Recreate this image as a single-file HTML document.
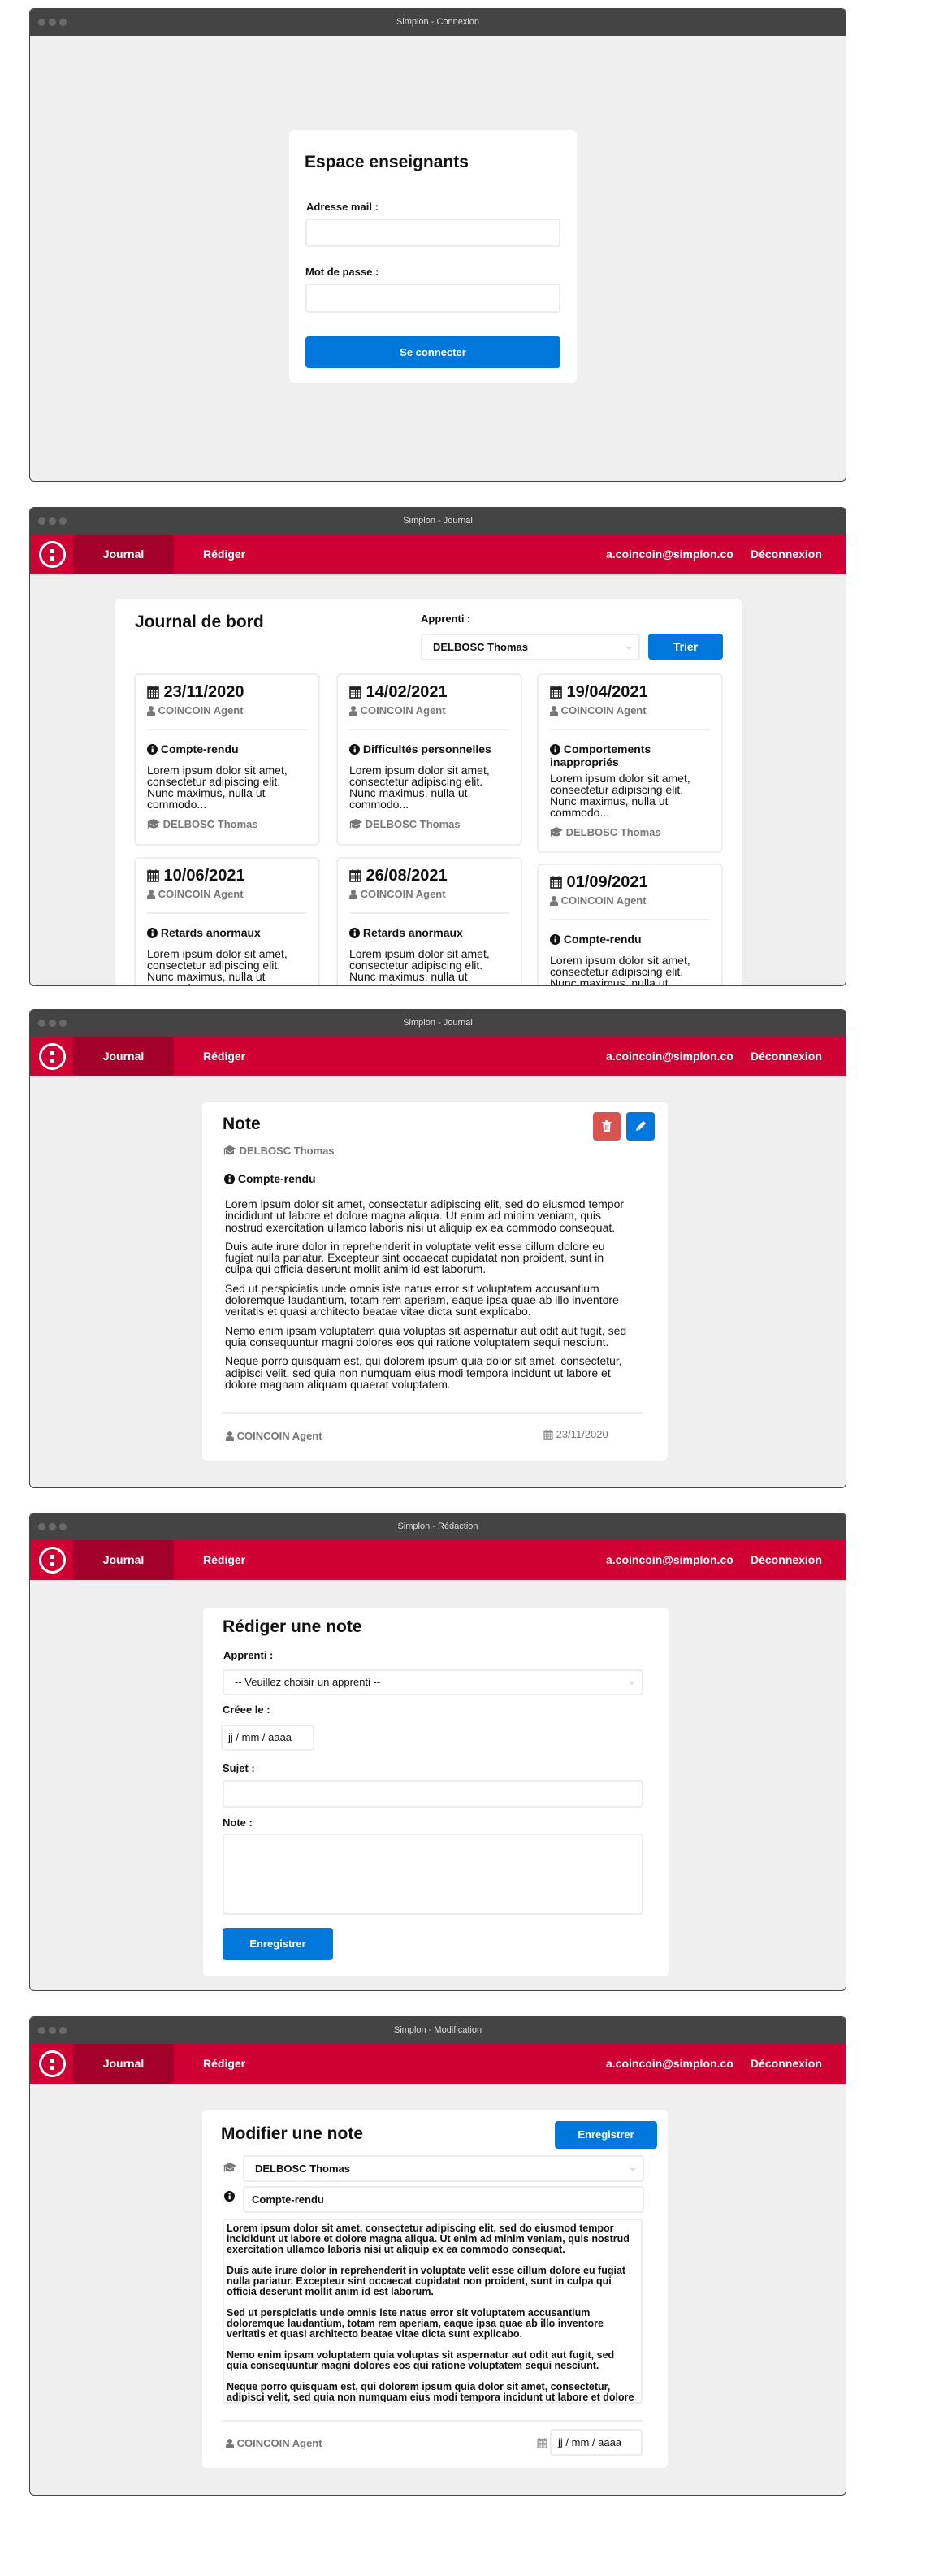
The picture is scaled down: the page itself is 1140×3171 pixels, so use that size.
<!DOCTYPE html>
<html><head><meta charset="utf-8">
<style>
*{box-sizing:border-box;margin:0;padding:0}
body{width:1140px;height:3171px;background:#fff;font-family:"Liberation Sans",sans-serif;color:#111;position:relative;overflow:hidden}
.win{position:absolute;left:36px;width:1006px;background:#efefef;border:1px solid #444;border-radius:6px;overflow:hidden}
.tb{position:absolute;left:0;top:0;right:0;height:33px;background:#444;color:#ddd;font-size:11px;text-align:center;line-height:33px}
.dots{position:absolute;left:10px;top:12px;line-height:0;display:flex}
.dots i{display:block;width:9px;height:9px;border-radius:50%;background:#6a6a6a;margin-right:4px}
.nav{position:absolute;left:0;right:0;top:33px;height:49px;background:#cf0034;color:#fff;font-weight:bold;font-size:14px}
.nav .logo{position:absolute;left:11px;top:8px;width:33px;height:33px;border:3px solid #fff;border-radius:50%}
.nav .logo b{position:absolute;left:11px;width:5px;height:5px;background:#fff}
.nav .tab{position:absolute;left:53px;top:0;width:124px;height:49px;background:#a3002b;text-align:center;line-height:49px}
.nav span{position:absolute;top:0;line-height:49px}
.card{position:absolute;background:#fff;border-radius:6px}
.abs{position:absolute}
.inp{position:absolute;background:#fff;border:2px solid #ececec;border-radius:4px}
.btn{position:absolute;background:#0077db;color:#fff;font-weight:bold;font-size:13px;border-radius:4px;text-align:center}
.lbl{position:absolute;font-size:13px;font-weight:bold;line-height:16px}
.h{position:absolute;font-size:21px;font-weight:bold;line-height:26px}
.grey{color:#777}
.jc{position:absolute;width:229px;background:#fff;border:2px solid #eee;border-radius:6px;padding:11px 14px 0}
.jc .d{font-size:20px;font-weight:bold;line-height:20px;white-space:nowrap}
.jc .a{font-size:13px;font-weight:bold;color:#777;line-height:16px;margin-top:5px}
.jc hr{border:0;height:2px;background:#eee;margin-top:14px}
.jc .t{font-size:14px;font-weight:bold;line-height:16px;margin-top:15px}
.jc .p{font-size:14px;line-height:14px;margin-top:11px;white-space:nowrap}
.jc .s{font-size:13px;font-weight:bold;color:#777;line-height:16px;margin-top:10px}
svg{vertical-align:-2px}
.txt{position:absolute;font-size:14px;line-height:14.3px;white-space:nowrap}
.txt p{margin-bottom:9px}
.sel:after{content:"";position:absolute;right:8px;top:50%;border:4px solid transparent;border-top-color:#ddd;margin-top:-1px}
</style></head><body>

<!-- Window 1 -->
<div class="win" style="top:10px;height:583px">
  <div class="tb"><div class="dots"><i></i><i></i><i></i></div>Simplon - Connexion</div>
  <div class="card" style="left:319px;top:149px;width:354px;height:311px">
    <div class="h" style="left:19px;top:27px">Espace enseignants</div>
    <div class="lbl" style="left:21px;top:87px">Adresse mail :</div>
    <div class="inp" style="left:20px;top:109px;width:314px;height:35px"></div>
    <div class="lbl" style="left:20px;top:167px">Mot de passe :</div>
    <div class="inp" style="left:20px;top:189px;width:314px;height:36px"></div>
    <div class="btn" style="left:20px;top:254px;width:314px;height:39px;line-height:39px">Se connecter</div>
  </div>
</div>

<!-- Window 2 -->
<div class="win" style="top:624px;height:590px">
  <div class="tb"><div class="dots"><i></i><i></i><i></i></div>Simplon - Journal</div>
  <div class="nav"><div class="logo"><b style="top:7px"></b><b style="top:16px"></b></div><div class="tab">Journal</div><span style="left:213px">Rédiger</span><span style="left:709px">a.coincoin@simplon.co</span><span style="left:887px">Déconnexion</span></div>
  <div class="card" style="left:105px;top:112px;width:771px;height:600px">
    <div class="h" style="left:24px;top:16px">Journal de bord</div>
    <div class="lbl" style="left:376px;top:17px">Apprenti :</div>
    <div class="inp sel" style="left:376px;top:43px;width:270px;height:33px;font-size:13px;font-weight:bold;line-height:29px;padding-left:13px">DELBOSC Thomas</div>
    <div class="btn" style="left:656px;top:43px;width:92px;height:32px;line-height:32px;font-size:14px">Trier</div>

    <div class="jc" style="left:23px;top:92px;height:212px">
      <div class="d"><svg width="15" height="17" viewBox="0 0 15 17"><rect x="1" y="3" width="13" height="13" fill="none" stroke="#222" stroke-width="1.6"/><rect x="1" y="3" width="13" height="3" fill="#222"/><path d="M4 1v4M11 1v4M1 9h13M1 12h13M4.5 6v10M7.5 6v10M10.5 6v10" stroke="#222" stroke-width="1"/></svg> 23/11/2020</div>
      <div class="a"><svg width="10" height="12" viewBox="0 0 10 12"><circle cx="5" cy="3" r="3" fill="#777"/><path d="M0 12v-3q0-3 5-3t5 3v3z" fill="#777"/></svg> COINCOIN Agent</div>
      <hr>
      <div class="t"><svg width="13" height="13" viewBox="0 0 14 14"><circle cx="7" cy="7" r="7" fill="#111"/><rect x="6" y="6" width="2.4" height="5" fill="#fff"/><circle cx="7.2" cy="3.8" r="1.3" fill="#fff"/></svg> Compte-rendu</div>
      <div class="p">Lorem ipsum dolor sit amet,<br>consectetur adipiscing elit.<br>Nunc maximus, nulla ut<br>commodo...</div>
      <div class="s"><svg width="16" height="13" viewBox="0 0 16 13"><path d="M8 0L0 4l8 4 8-4z M3 6v4q5 3 10 0V6L8 9z" fill="#777"/><path d="M1.5 4.5v7" stroke="#777" stroke-width="1.3"/></svg> DELBOSC Thomas</div>
    </div>
    <div class="jc" style="left:272px;top:92px;height:212px">
      <div class="d"><svg width="15" height="17" viewBox="0 0 15 17"><rect x="1" y="3" width="13" height="13" fill="none" stroke="#222" stroke-width="1.6"/><rect x="1" y="3" width="13" height="3" fill="#222"/><path d="M4 1v4M11 1v4M1 9h13M1 12h13M4.5 6v10M7.5 6v10M10.5 6v10" stroke="#222" stroke-width="1"/></svg> 14/02/2021</div>
      <div class="a"><svg width="10" height="12" viewBox="0 0 10 12"><circle cx="5" cy="3" r="3" fill="#777"/><path d="M0 12v-3q0-3 5-3t5 3v3z" fill="#777"/></svg> COINCOIN Agent</div>
      <hr>
      <div class="t" style="white-space:nowrap"><svg width="13" height="13" viewBox="0 0 14 14"><circle cx="7" cy="7" r="7" fill="#111"/><rect x="6" y="6" width="2.4" height="5" fill="#fff"/><circle cx="7.2" cy="3.8" r="1.3" fill="#fff"/></svg> Difficultés personnelles</div>
      <div class="p">Lorem ipsum dolor sit amet,<br>consectetur adipiscing elit.<br>Nunc maximus, nulla ut<br>commodo...</div>
      <div class="s"><svg width="16" height="13" viewBox="0 0 16 13"><path d="M8 0L0 4l8 4 8-4z M3 6v4q5 3 10 0V6L8 9z" fill="#777"/><path d="M1.5 4.5v7" stroke="#777" stroke-width="1.3"/></svg> DELBOSC Thomas</div>
    </div>
    <div class="jc" style="left:519px;top:92px;height:221px">
      <div class="d"><svg width="15" height="17" viewBox="0 0 15 17"><rect x="1" y="3" width="13" height="13" fill="none" stroke="#222" stroke-width="1.6"/><rect x="1" y="3" width="13" height="3" fill="#222"/><path d="M4 1v4M11 1v4M1 9h13M1 12h13M4.5 6v10M7.5 6v10M10.5 6v10" stroke="#222" stroke-width="1"/></svg> 19/04/2021</div>
      <div class="a"><svg width="10" height="12" viewBox="0 0 10 12"><circle cx="5" cy="3" r="3" fill="#777"/><path d="M0 12v-3q0-3 5-3t5 3v3z" fill="#777"/></svg> COINCOIN Agent</div>
      <hr>
      <div class="t"><svg width="13" height="13" viewBox="0 0 14 14"><circle cx="7" cy="7" r="7" fill="#111"/><rect x="6" y="6" width="2.4" height="5" fill="#fff"/><circle cx="7.2" cy="3.8" r="1.3" fill="#fff"/></svg> Comportements<br>inappropriés</div>
      <div class="p" style="margin-top:5px">Lorem ipsum dolor sit amet,<br>consectetur adipiscing elit.<br>Nunc maximus, nulla ut<br>commodo...</div>
      <div class="s"><svg width="16" height="13" viewBox="0 0 16 13"><path d="M8 0L0 4l8 4 8-4z M3 6v4q5 3 10 0V6L8 9z" fill="#777"/><path d="M1.5 4.5v7" stroke="#777" stroke-width="1.3"/></svg> DELBOSC Thomas</div>
    </div>

    <div class="jc" style="left:23px;top:318px;height:212px">
      <div class="d"><svg width="15" height="17" viewBox="0 0 15 17"><rect x="1" y="3" width="13" height="13" fill="none" stroke="#222" stroke-width="1.6"/><rect x="1" y="3" width="13" height="3" fill="#222"/><path d="M4 1v4M11 1v4M1 9h13M1 12h13M4.5 6v10M7.5 6v10M10.5 6v10" stroke="#222" stroke-width="1"/></svg> 10/06/2021</div>
      <div class="a"><svg width="10" height="12" viewBox="0 0 10 12"><circle cx="5" cy="3" r="3" fill="#777"/><path d="M0 12v-3q0-3 5-3t5 3v3z" fill="#777"/></svg> COINCOIN Agent</div>
      <hr>
      <div class="t"><svg width="13" height="13" viewBox="0 0 14 14"><circle cx="7" cy="7" r="7" fill="#111"/><rect x="6" y="6" width="2.4" height="5" fill="#fff"/><circle cx="7.2" cy="3.8" r="1.3" fill="#fff"/></svg> Retards anormaux</div>
      <div class="p">Lorem ipsum dolor sit amet,<br>consectetur adipiscing elit.<br>Nunc maximus, nulla ut<br>commodo...</div>
    </div>
    <div class="jc" style="left:272px;top:318px;height:212px">
      <div class="d"><svg width="15" height="17" viewBox="0 0 15 17"><rect x="1" y="3" width="13" height="13" fill="none" stroke="#222" stroke-width="1.6"/><rect x="1" y="3" width="13" height="3" fill="#222"/><path d="M4 1v4M11 1v4M1 9h13M1 12h13M4.5 6v10M7.5 6v10M10.5 6v10" stroke="#222" stroke-width="1"/></svg> 26/08/2021</div>
      <div class="a"><svg width="10" height="12" viewBox="0 0 10 12"><circle cx="5" cy="3" r="3" fill="#777"/><path d="M0 12v-3q0-3 5-3t5 3v3z" fill="#777"/></svg> COINCOIN Agent</div>
      <hr>
      <div class="t"><svg width="13" height="13" viewBox="0 0 14 14"><circle cx="7" cy="7" r="7" fill="#111"/><rect x="6" y="6" width="2.4" height="5" fill="#fff"/><circle cx="7.2" cy="3.8" r="1.3" fill="#fff"/></svg> Retards anormaux</div>
      <div class="p">Lorem ipsum dolor sit amet,<br>consectetur adipiscing elit.<br>Nunc maximus, nulla ut<br>commodo...</div>
    </div>
    <div class="jc" style="left:519px;top:326px;height:212px">
      <div class="d"><svg width="15" height="17" viewBox="0 0 15 17"><rect x="1" y="3" width="13" height="13" fill="none" stroke="#222" stroke-width="1.6"/><rect x="1" y="3" width="13" height="3" fill="#222"/><path d="M4 1v4M11 1v4M1 9h13M1 12h13M4.5 6v10M7.5 6v10M10.5 6v10" stroke="#222" stroke-width="1"/></svg> 01/09/2021</div>
      <div class="a"><svg width="10" height="12" viewBox="0 0 10 12"><circle cx="5" cy="3" r="3" fill="#777"/><path d="M0 12v-3q0-3 5-3t5 3v3z" fill="#777"/></svg> COINCOIN Agent</div>
      <hr>
      <div class="t"><svg width="13" height="13" viewBox="0 0 14 14"><circle cx="7" cy="7" r="7" fill="#111"/><rect x="6" y="6" width="2.4" height="5" fill="#fff"/><circle cx="7.2" cy="3.8" r="1.3" fill="#fff"/></svg> Compte-rendu</div>
      <div class="p">Lorem ipsum dolor sit amet,<br>consectetur adipiscing elit.<br>Nunc maximus, nulla ut<br>commodo...</div>
    </div>
  </div>
</div>

<!-- Window 3 -->
<div class="win" style="top:1242px;height:590px">
  <div class="tb"><div class="dots"><i></i><i></i><i></i></div>Simplon - Journal</div>
  <div class="nav"><div class="logo"><b style="top:7px"></b><b style="top:16px"></b></div><div class="tab">Journal</div><span style="left:213px">Rédiger</span><span style="left:709px">a.coincoin@simplon.co</span><span style="left:887px">Déconnexion</span></div>
  <div class="card" style="left:212px;top:114px;width:573px;height:441px">
    <div class="h" style="left:25px;top:14px">Note</div>
    <div class="abs" style="left:481px;top:12px;width:34px;height:35px;background:#d9534f;border-radius:4px"><svg style="position:absolute;left:11px;top:10px" width="12" height="14" viewBox="0 0 12 14"><path d="M0 2h12v1.5H0zM4 0h4v2H4zM1.5 4h9l-.7 10H2.2z" fill="#fff"/><path d="M4.3 6v6M6 6v6M7.7 6v6" stroke="#d9534f" stroke-width="0.8"/></svg></div>
    <div class="abs" style="left:522px;top:12px;width:35px;height:35px;background:#0077db;border-radius:4px"><svg style="position:absolute;left:11px;top:10px" width="14" height="14" viewBox="0 0 14 14"><path d="M1 13l1-4 8-8 3 3-8 8z" fill="#fff"/><path d="M2.5 9.5l2 2" stroke="#0077db" stroke-width="1"/></svg></div>
    <div class="lbl grey" style="left:26px;top:52px"><svg width="16" height="13" viewBox="0 0 16 13"><path d="M8 0L0 4l8 4 8-4z M3 6v4q5 3 10 0V6L8 9z" fill="#777"/><path d="M1.5 4.5v7" stroke="#777" stroke-width="1.3"/></svg> DELBOSC Thomas</div>
    <div class="lbl" style="left:27px;top:86px;font-size:14px"><svg width="13" height="13" viewBox="0 0 14 14"><circle cx="7" cy="7" r="7" fill="#111"/><rect x="6" y="6" width="2.4" height="5" fill="#fff"/><circle cx="7.2" cy="3.8" r="1.3" fill="#fff"/></svg> Compte-rendu</div>
    <div class="txt" style="left:28px;top:118px">
      <p>Lorem ipsum dolor sit amet, consectetur adipiscing elit, sed do eiusmod tempor<br>incididunt ut labore et dolore magna aliqua. Ut enim ad minim veniam, quis<br>nostrud exercitation ullamco laboris nisi ut aliquip ex ea commodo consequat.</p>
      <p>Duis aute irure dolor in reprehenderit in voluptate velit esse cillum dolore eu<br>fugiat nulla pariatur. Excepteur sint occaecat cupidatat non proident, sunt in<br>culpa qui officia deserunt mollit anim id est laborum.</p>
      <p>Sed ut perspiciatis unde omnis iste natus error sit voluptatem accusantium<br>doloremque laudantium, totam rem aperiam, eaque ipsa quae ab illo inventore<br>veritatis et quasi architecto beatae vitae dicta sunt explicabo.</p>
      <p>Nemo enim ipsam voluptatem quia voluptas sit aspernatur aut odit aut fugit, sed<br>quia consequuntur magni dolores eos qui ratione voluptatem sequi nesciunt.</p>
      <p>Neque porro quisquam est, qui dolorem ipsum quia dolor sit amet, consectetur,<br>adipisci velit, sed quia non numquam eius modi tempora incidunt ut labore et<br>dolore magnam aliquam quaerat voluptatem.</p>
    </div>
    <div class="abs" style="left:25px;top:381px;width:518px;height:2px;background:#eee"></div>
    <div class="lbl grey" style="left:29px;top:403px"><svg width="10" height="12" viewBox="0 0 10 12"><circle cx="5" cy="3" r="3" fill="#777"/><path d="M0 12v-3q0-3 5-3t5 3v3z" fill="#777"/></svg> COINCOIN Agent</div>
    <div class="abs grey" style="left:420px;top:401px;font-size:13px;line-height:16px"><svg width="12" height="13" viewBox="0 0 15 17"><rect x="1" y="3" width="13" height="13" fill="none" stroke="#888" stroke-width="1.6"/><rect x="1" y="3" width="13" height="3" fill="#888"/><path d="M4 1v4M11 1v4M1 9h13M1 12h13M4.5 6v10M7.5 6v10M10.5 6v10" stroke="#888" stroke-width="1"/></svg> 23/11/2020</div>
  </div>
</div>

<!-- Window 4 -->
<div class="win" style="top:1862px;height:589px">
  <div class="tb"><div class="dots"><i></i><i></i><i></i></div>Simplon - Rédaction</div>
  <div class="nav"><div class="logo"><b style="top:7px"></b><b style="top:16px"></b></div><div class="tab">Journal</div><span style="left:213px">Rédiger</span><span style="left:709px">a.coincoin@simplon.co</span><span style="left:887px">Déconnexion</span></div>
  <div class="card" style="left:213px;top:116px;width:573px;height:454px">
    <div class="h" style="left:24px;top:11px">Rédiger une note</div>
    <div class="lbl" style="left:25px;top:51px">Apprenti :</div>
    <div class="inp sel" style="left:24px;top:76px;width:518px;height:32px;font-size:13px;line-height:28px;padding-left:13px">-- Veuillez choisir un apprenti --</div>
    <div class="lbl" style="left:24px;top:118px">Créee le :</div>
    <div class="inp" style="left:22px;top:144px;width:115px;height:32px;font-size:13px;line-height:28px;padding-left:7px">jj / mm / aaaa</div>
    <div class="lbl" style="left:24px;top:190px">Sujet :</div>
    <div class="inp" style="left:24px;top:212px;width:518px;height:34px"></div>
    <div class="lbl" style="left:24px;top:257px">Note :</div>
    <div class="inp" style="left:24px;top:278px;width:518px;height:100px"></div>
    <div class="btn" style="left:24px;top:394px;width:136px;height:40px;line-height:40px">Enregistrer</div>
  </div>
</div>

<!-- Window 5 -->
<div class="win" style="top:2482px;height:590px">
  <div class="tb"><div class="dots"><i></i><i></i><i></i></div>Simplon - Modification</div>
  <div class="nav"><div class="logo"><b style="top:7px"></b><b style="top:16px"></b></div><div class="tab">Journal</div><span style="left:213px">Rédiger</span><span style="left:709px">a.coincoin@simplon.co</span><span style="left:887px">Déconnexion</span></div>
  <div class="card" style="left:212px;top:114px;width:573px;height:441px">
    <div class="h" style="left:23px;top:17px">Modifier une note</div>
    <div class="btn" style="left:434px;top:14px;width:126px;height:34px;line-height:34px">Enregistrer</div>
    <svg class="abs" style="left:26px;top:65px" width="16" height="13" viewBox="0 0 16 13"><path d="M8 0L0 4l8 4 8-4z M3 6v4q5 3 10 0V6L8 9z" fill="#777"/><path d="M1.5 4.5v7" stroke="#777" stroke-width="1.3"/></svg>
    <div class="inp sel" style="left:50px;top:56px;width:494px;height:33px;font-size:13px;font-weight:bold;line-height:29px;padding-left:13px">DELBOSC Thomas</div>
    <svg class="abs" style="left:27px;top:100px" width="13" height="13" viewBox="0 0 14 14"><circle cx="7" cy="7" r="7" fill="#111"/><rect x="6" y="6" width="2.4" height="5" fill="#fff"/><circle cx="7.2" cy="3.8" r="1.3" fill="#fff"/></svg>
    <div class="inp" style="left:50px;top:94px;width:494px;height:33px;font-size:13px;font-weight:bold;line-height:29px;padding-left:9px">Compte-rendu</div>
    <div class="inp" style="left:25px;top:134px;width:517px;height:228px;overflow:hidden;border-width:2px">
      <div class="txt" style="left:3px;top:4px;line-height:13px;font-size:12.5px;font-weight:bold">Lorem ipsum dolor sit amet, consectetur adipiscing elit, sed do eiusmod tempor<br>incididunt ut labore et dolore magna aliqua. Ut enim ad minim veniam, quis nostrud<br>exercitation ullamco laboris nisi ut aliquip ex ea commodo consequat.<br><br>Duis aute irure dolor in reprehenderit in voluptate velit esse cillum dolore eu fugiat<br>nulla pariatur. Excepteur sint occaecat cupidatat non proident, sunt in culpa qui<br>officia deserunt mollit anim id est laborum.<br><br>Sed ut perspiciatis unde omnis iste natus error sit voluptatem accusantium<br>doloremque laudantium, totam rem aperiam, eaque ipsa quae ab illo inventore<br>veritatis et quasi architecto beatae vitae dicta sunt explicabo.<br><br>Nemo enim ipsam voluptatem quia voluptas sit aspernatur aut odit aut fugit, sed<br>quia consequuntur magni dolores eos qui ratione voluptatem sequi nesciunt.<br><br>Neque porro quisquam est, qui dolorem ipsum quia dolor sit amet, consectetur,<br>adipisci velit, sed quia non numquam eius modi tempora incidunt ut labore et dolore<br>magnam aliquam quaerat voluptatem.</div>
    </div>
    <div class="abs" style="left:25px;top:382px;width:518px;height:2px;background:#eee"></div>
    <div class="lbl grey" style="left:29px;top:403px"><svg width="10" height="12" viewBox="0 0 10 12"><circle cx="5" cy="3" r="3" fill="#777"/><path d="M0 12v-3q0-3 5-3t5 3v3z" fill="#777"/></svg> COINCOIN Agent</div>
    <svg class="abs" style="left:412px;top:403px" width="13" height="14" viewBox="0 0 15 17"><rect x="1" y="3" width="13" height="13" fill="none" stroke="#999" stroke-width="1.6"/><rect x="1" y="3" width="13" height="3" fill="#999"/><path d="M4 1v4M11 1v4M1 9h13M1 12h13M4.5 6v10M7.5 6v10M10.5 6v10" stroke="#999" stroke-width="1"/></svg>
    <div class="inp" style="left:428px;top:393px;width:114px;height:33px;font-size:13px;line-height:29px;padding-left:8px">jj / mm / aaaa</div>
  </div>
</div>
</body></html>
